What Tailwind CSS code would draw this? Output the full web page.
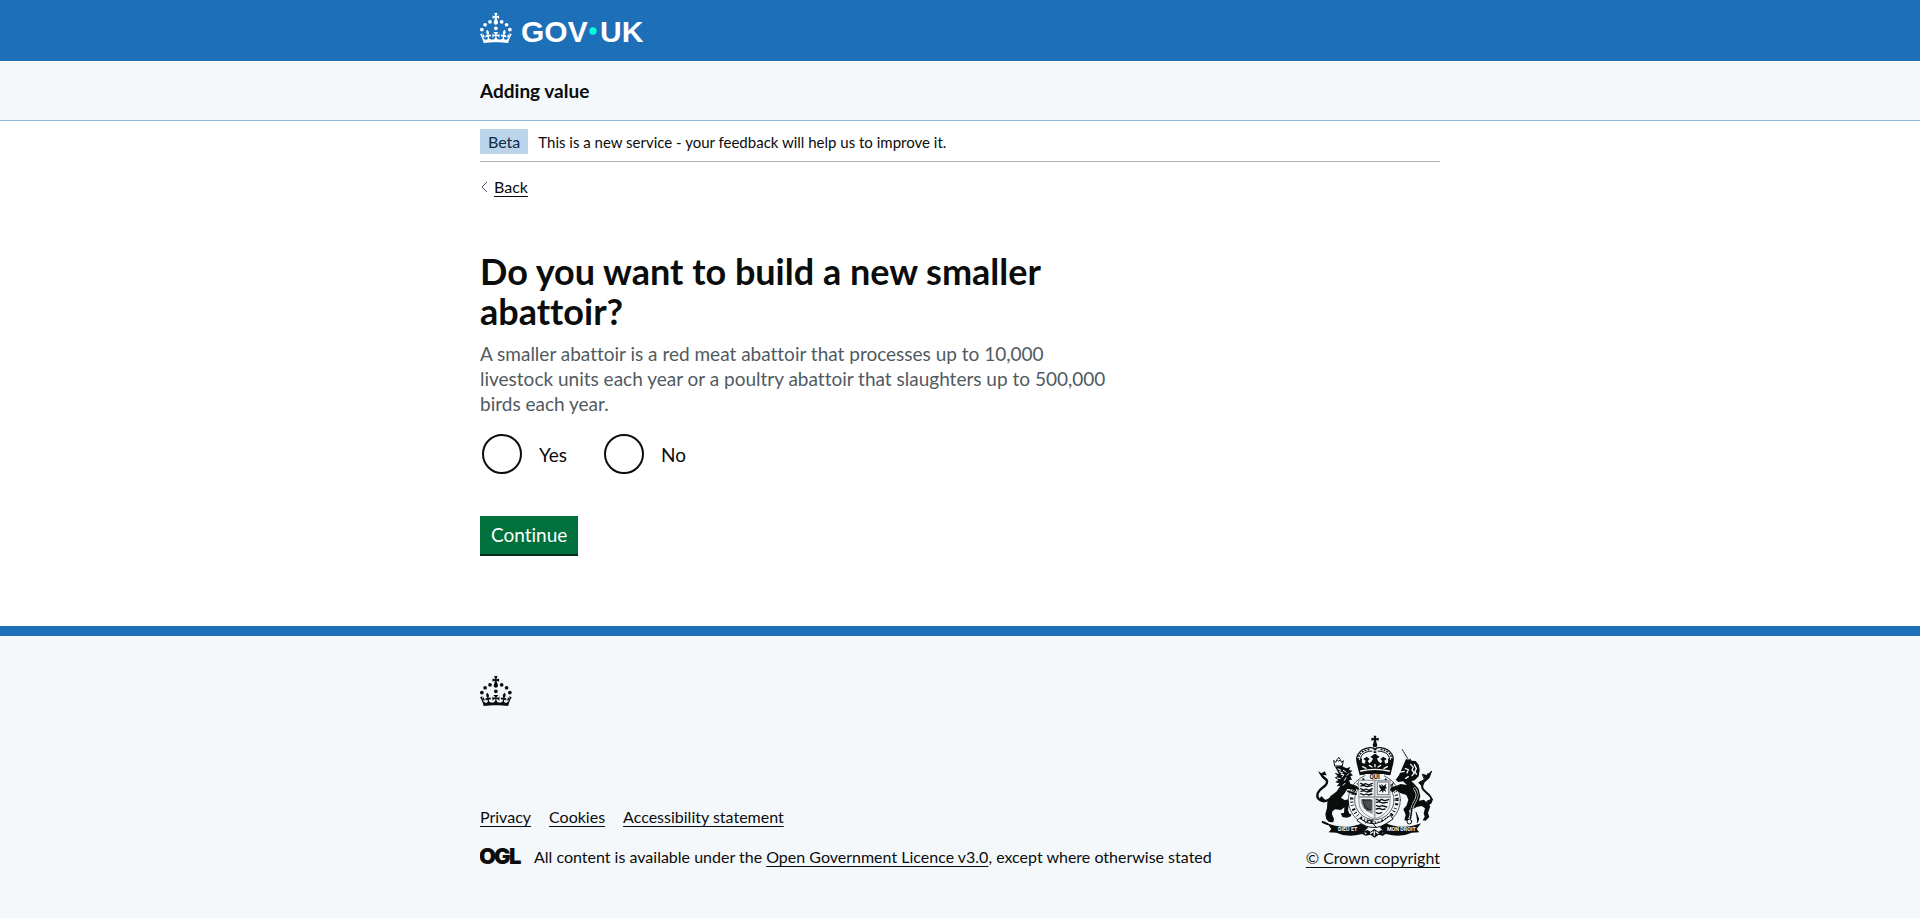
<!DOCTYPE html>
<html lang="en">
<head>
<meta charset="utf-8">
<meta name="viewport" content="width=device-width, initial-scale=1">
<title>Do you want to build a new smaller abattoir? - Adding value</title>
<script src="https://cdn.jsdelivr.net/npm/@tailwindcss/browser@4"></script>
</head>
<body class="flex min-h-screen flex-col bg-[#f4f8fb] font-['Lato',sans-serif] text-base text-[#0b0c0c] [font-variant-ligatures:none]">

<!-- Shared crown symbol -->
<svg class="hidden" aria-hidden="true">
  <symbol id="crown" viewBox="0 0 64 60">
    <circle cx="20" cy="17.6" r="3.7"/><circle cx="10.2" cy="23.5" r="3.7"/><circle cx="3.7" cy="33.2" r="3.7"/><circle cx="31.7" cy="30.6" r="3.7"/><circle cx="43.3" cy="17.6" r="3.7"/><circle cx="53.2" cy="23.5" r="3.7"/><circle cx="59.7" cy="33.2" r="3.7"/>
    <path d="M33.1,9.8c.2-.1.3-.3.5-.5l4.6,2.4v-6.8l-4.6,1.5c-.1-.2-.3-.3-.5-.5l1.9-5.9h-6.7l1.9,5.9c-.2.1-.3.3-.5.5l-4.6-1.5v6.8l4.6-2.4c.1.2.3.3.5.5l-2.6,8c-.9,2.8,1.2,5.7,4.1,5.7h0c3,0,5.1-2.9,4.1-5.7l-2.6-8ZM37,37.9s-3.4,3.8-4.1,6.1c2.2,0,4.2-.5,6.4-2.8l-.7,8.5c-2-2.8-4.4-4.1-5.7-3.8.1,3.1.5,6.7,5.8,7.2,3.7.3,6.7-1.5,7-3.8.4-2.6-2-4.3-3.7-1.6-1.4-4.5,2.4-6.1,4.9-3.2-1.9-4.5-1.8-7.7,2.4-10.9,3,4,2.6,7.3-1.2,11.1,2.4-1.3,6.2,0,4,4.6-1.2-2.8-3.7-2.2-4.2.2-.3,1.7.7,3.7,3,4.2,1.9.3,4.7-.9,7-5.9-1.3,0-2.4.7-3.9,1.7l2.4-8c.6,2.3,1.4,3.7,2.2,4.5.6-1.6.5-2.8,0-5.3l5,1.8c-2.6,3.6-5.2,8.7-7.3,17.5-7.4-1.1-15.7-1.7-24.5-1.7h0c-8.8,0-17.1.6-24.5,1.7-2.1-8.9-4.7-13.9-7.3-17.5l5-1.8c-.5,2.5-.6,3.7,0,5.3.8-.8,1.6-2.3,2.2-4.5l2.4,8c-1.5-1-2.6-1.7-3.9-1.7,2.3,5,5.2,6.2,7,5.9,2.3-.4,3.3-2.4,3-4.2-.5-2.4-3-3.1-4.2-.2-2.2-4.6,1.6-6,4-4.6-3.7-3.7-4.2-7.1-1.2-11.1,4.2,3.2,4.3,6.4,2.4,10.9,2.5-2.8,6.3-1.3,4.9,3.2-1.8-2.7-4.1-1-3.7,1.6.3,2.3,3.3,4.1,7,3.8,5.4-.5,5.7-4.2,5.8-7.2-1.3-.2-3.7,1-5.7,3.8l-.7-8.5c2.2,2.3,4.2,2.7,6.4,2.8-.7-2.3-4.1-6.1-4.1-6.1h10.6Z"/>
  </symbol>
</svg>

<header>
  <div class="bg-[#1d70b8] text-white">
    <div class="mx-auto flex h-[61px] max-w-[960px] items-start pt-[13px]">
      <a href="#" aria-label="GOV.UK" class="flex items-start gap-2">
        <svg class="h-[30px] w-8 fill-current" aria-hidden="true"><use href="#crown"/></svg>
        <svg class="h-10 w-[126px] fill-current" viewBox="0 0 126 40" aria-hidden="true">
          <g font-family="Liberation Sans, sans-serif" font-size="30" font-weight="700"><text x="1" y="29">GOV</text><text x="80" y="29">UK</text></g>
          <circle cx="73" cy="18" r="3.7" fill="#00ffe0"/>
        </svg>
      </a>
    </div>
  </div>
  <div class="border-b border-[#8eb8dc] bg-[#f4f8fb]">
    <div class="mx-auto flex h-[59px] max-w-[960px] items-center">
      <a href="#" class="text-[19px] leading-[25px] font-bold">Adding value</a>
    </div>
  </div>
</header>

<div class="w-full bg-white pb-[70px]">
  <div class="mx-auto max-w-[960px]">
    <div class="flex items-center gap-[10px] border-b border-[#b1b4b6] pt-2 pb-[7px]">
      <strong class="bg-[#bbd4ea] px-2 leading-[25px] font-normal text-[#0c2d4a]">Beta</strong>
      <span class="text-[15px] leading-5">This is a new service - your feedback will help us to improve it.</span>
    </div>
    <a href="#" class="mt-[15px] inline-flex items-center gap-[6px] leading-5">
      <svg class="h-3 w-2 fill-none stroke-[#505a5f]" viewBox="0 0 8 12" aria-hidden="true"><path d="M7 1 2 6l5 5"/></svg>
      <span class="underline underline-offset-[3px]">Back</span>
    </a>

    <main class="mt-[52px] max-w-[636px]">
      <form>
        <fieldset aria-describedby="hint">
          <legend><h1 class="text-[36px] leading-10 font-bold">Do you want to build a new smaller abattoir?</h1></legend>
          <p id="hint" class="mt-[10px] text-[19px] leading-[25px] text-[#505a5f]">A smaller abattoir is a red meat abattoir that processes up to 10,000 livestock units each year or a poultry abattoir that slaughters up to 500,000 birds each year.</p>
          <div class="mt-[18px] ml-[2px] flex gap-[37px] text-[19px] leading-[25px]">
            <label class="flex items-center gap-[17px]"><input type="radio" name="build" value="yes" class="size-10 appearance-none rounded-full border-2 border-[#0b0c0c] bg-white checked:shadow-[inset_0_0_0_8px_white] checked:bg-[#0b0c0c]">Yes</label>
            <label class="flex items-center gap-[17px]"><input type="radio" name="build" value="no" class="size-10 appearance-none rounded-full border-2 border-[#0b0c0c] bg-white checked:shadow-[inset_0_0_0_8px_white] checked:bg-[#0b0c0c]">No</label>
          </div>
        </fieldset>
        <button type="submit" class="mt-[42px] h-10 border-b-2 border-[#002d18] bg-[#00703c] px-[11px] text-[19px] leading-[38px] text-white">Continue</button>
      </form>
    </main>
  </div>
</div>

<footer class="w-full grow border-t-10 border-[#1d70b8]">
  <div class="mx-auto max-w-[960px] pt-10">
    <svg class="h-[30px] w-8 fill-current" aria-hidden="true"><use href="#crown"/></svg>
    <div class="mt-[29px] flex items-end justify-between">
      <div>
        <ul class="flex gap-[18px] leading-5">
          <li><a href="#" class="underline underline-offset-[3px]">Privacy</a></li>
          <li><a href="#" class="underline underline-offset-[3px]">Cookies</a></li>
          <li><a href="#" class="underline underline-offset-[3px]">Accessibility statement</a></li>
        </ul>
        <div class="mt-4 flex items-center gap-3 leading-5">
          <svg class="h-7 w-[42px] fill-current" viewBox="0 0 42 28" role="img" aria-label="Open Government Licence">
            <g font-family="Inter, sans-serif" font-size="22" font-weight="900"><text x="-1" y="21">O</text><text x="14" y="21">G</text><text x="29" y="21">L</text></g>
          </svg>
          <p>All content is available under the <a href="#" class="underline underline-offset-[3px]">Open Government Licence v3.0</a>, except where otherwise stated</p>
        </div>
      </div>
      <a href="#" class="flex flex-col items-end pb-[3px] leading-5">
        <svg class="mr-[7px] mb-[10px] h-[103px] w-[117px]" viewBox="50 31 351 309" fill="#0b0c0c" stroke-linejoin="round" stroke-linecap="round" aria-hidden="true">
          <!-- crown -->
          <path d="M223 33h8l-1 8 8-2v9l-8-2 2 10h-10l2-10-8 2v-9l8 2z"/>
          <circle cx="227" cy="61" r="7"/>
          <path d="M181 124C162 101 176 73 212 69q12-1 15 6 3-7 15-6c36 4 50 32 31 55" fill="none" stroke="#0b0c0c" stroke-width="4"/>
          <path d="M188 117C176 99 188 80 218 79M266 117c12-18 0-37-30-38" fill="none" stroke="#0b0c0c" stroke-width="3"/>
          <path d="M184 120C168 101 182 76 214 74M270 120c16-19 2-44-30-46" fill="none" stroke="#0b0c0c" stroke-width="5" stroke-dasharray="1 8"/>
          <path d="M227 72v34" fill="none" stroke="#0b0c0c" stroke-width="8" stroke-dasharray="5 3" stroke-linecap="butt"/>
          <path d="M174 99l6 8 8-6-1 13 9 3 3-9-7-5 10-7 9 7-6 6 5 7 7-6 4-8-8-6 14-8 14 8-8 6 4 8 7 6 5-7-6-6 9-7 10 7-7 5 3 9 9-3-1-13 8 6 6-8 2 17-9 36q-46-10-92 0l-9-36z"/>
          <path d="M184 139q43-10 86 0M190 126l10 5M264 126l-10 5M210 122l8 5M244 122l-8 5M227 119v7" fill="none" stroke="#f4f8fb" stroke-width="4"/>
          <!-- garter -->
          <circle cx="225" cy="226" r="78" fill="#f4f8fb" stroke="#0b0c0c" stroke-width="2"/>
          <circle cx="225" cy="226" r="68" fill="none" stroke="#0b0c0c" stroke-width="10" stroke-dasharray="3 7 6 9 2 7" stroke-linecap="butt"/>
          <circle cx="225" cy="226" r="59" fill="#f4f8fb" stroke="#0b0c0c" stroke-width="2"/>
          <path d="M198 148h56v20h-56z" fill="#f4f8fb"/>
          <text x="226" y="164" text-anchor="middle" font-family="Roboto, sans-serif" font-size="19" font-weight="700">QUI</text>
          <!-- quartered shield -->
          <path d="M179 167h93v66c0 28-25 43-46 50-22-7-47-22-47-50z" fill="#f4f8fb" stroke="#8b8f91" stroke-width="3"/>
          <path d="M226 167v116M179 217h93" fill="none" stroke="#a4a8aa" stroke-width="6"/>
          <path d="M234 172h34v38h-34z" fill="none" stroke="#8b8f91" stroke-width="4"/>
          <path d="M184 176l8 4 7-3 8 4 12-5M185 184l7-2 11 4 15-3M184 192l9 4 7-3 8 4 11-5M185 200l8-2 10 4 14-3M184 207l9 4 8-3 6 3 11-3" fill="none" stroke="#0b0c0c" stroke-width="4"/>
          <path d="M240 179l9 8-4-10 8 7 8-7-2 10 5 3-7 2 4 10-8-5-2 8-4-7-9 5 7-9-5-6z"/>
          <path d="M231 224l10 4 5-4 10 4 12-3M231 233l8-2 10 4 15-2M231 243l9 3 9-3 13 4M231 253l9-2 9 4 8-2M231 264l7 3 9-3" fill="none" stroke="#0b0c0c" stroke-width="4"/>
          <path d="M184 224h36v44c-20-7-36-20-36-44z" fill="#8b8f91"/>
          <path d="M191 226h24v30c-12-2-24-12-24-30zM197 228v23M203 228v29M209 228v28" fill="none" stroke="#0b0c0c" stroke-width="3"/>
          <!-- lion -->
          <path d="M104 108l5 5 4-8 5 5 5-5 4 8 5-5-3 16h-22zM115 103l3-5 4 5" fill="none" stroke="#0b0c0c" stroke-width="3"/>
          <path d="M107 126l20-3 14 8 12-4-4 9 10 2-6 6 8 8-8 3 5 10-9 2 4 10 20 7 8 11-12-3 2 9-12-7-15-1-8 13-11 13 12 8 9-3 3 14-3 18 3 8 6 11-12 4-14-2-3-8 8-4 1-17-10 8-17-2-9 6-1 9 6 14-2 10-13-1-8-8-3-15 5-19 1-17 9-18 18-14 12-17-11 1 8-9-12-3 9-7-11-7 9-5-9-9 11-1z"/>
          <path d="M116 133l7 2-2 7 9 2-5 5 9 1-6 7M110 144l7 2M132 137l8 5M113 160l10 2M140 159l-5 8M148 147l-5 5M137 176l-6 6" fill="none" stroke="#f4f8fb" stroke-width="3"/>
          <path d="M92 223c-23 16-44-1-36-19 7-16 30-20 27-34-2-10-14-7-15-19" fill="none" stroke="#0b0c0c" stroke-width="7"/>
          <path d="M56 139l10 7 10-6 6 12-12-1 18 16-18-7-8-10zM60 223l6-9 12 12-9 7z"/>
          <path d="M150 190l18 3M146 200l24 8M70 292l14 6M128 268l25 3" fill="none" stroke="#0b0c0c" stroke-width="6"/>
          <!-- unicorn -->
          <path d="M309 75l19 32" fill="none" stroke="#0b0c0c" stroke-width="3" stroke-dasharray="5 3"/>
          <path d="M320 103l9 4 3-6 5 7 12 1 9 11 3 15-3 20-12 12-10 3 10 9 12 14 5 21-4 14 15-3 19 20-7 20 4 12-11 11-9-1 6-11-3-10 4-15-10-7-15 3-14 8-9 2 3 13-8 18-9-1 4-17-7-16 10-12 5-17-6-14-18-6-15-10-8 8-8-7 5-9 13-3 14-6 19 3-12-11-14 2-8-7 10-13z"/>
          <path d="M334 119l8 9-4 8 7 9-7 8M345 120l6 12-4 8 4 9M318 132l9 3-4 10M302 142l13-2M327 156l-8 5" fill="none" stroke="#f4f8fb" stroke-width="4"/>
          <path d="M346 192c14 18 5 31-3 45s-5 24-10 45" fill="none" stroke="#f4f8fb" stroke-width="8"/>
          <path d="M346 192c14 18 5 31-3 45s-5 24-10 45" fill="none" stroke="#0b0c0c" stroke-width="5" stroke-dasharray="3 4"/>
          <circle cx="330" cy="291" r="7" fill="none" stroke="#0b0c0c" stroke-width="3"/>
          <path d="M367 234c24 15 38-7 23-22-19-18-27-21-18-38 5-11 17-7 14-25" fill="none" stroke="#0b0c0c" stroke-width="6"/>
          <path d="M370 149l13 4 14-14-8 21-12 6zM366 182l-8-8 16-9zM383 241l10-4 7-14-16 6zM282 174l-5 13M294 188l-10 12M350 263l8 20-4 11" stroke="#0b0c0c" stroke-width="3"/>
          <!-- motto ribbon -->
          <path d="M83 296l24 7q43 10 86-9l13 15-12 12 8 13-14-6q-44 12-77-4l-23-1 8-10zM365 296l-24 7q-43 10-86-9l-13 15 12 12-8 13 14-6q44 12 77-4l23-1-8-10z"/>
          <g fill="#f4f8fb" font-family="Roboto, sans-serif" font-size="16" font-weight="700" text-anchor="middle"><text x="145" y="320">DIEU ET</text><text x="306" y="320">MON DROIT</text></g>
          <path d="M181 281q43 38 92-9l8 11q-39 29-57 25-25 2-50-20z" fill="#f4f8fb" stroke="#0b0c0c" stroke-width="3"/>
          <path d="M198 295l13-9 20 22M203 286l20 3" fill="none" stroke="#0b0c0c" stroke-width="3"/>
          <path d="M190 321l15-5 8 5 12-8 12 8 9-5 14 5-11 4 4 8-15-3-12 9-13-9-15 3 4-8z"/>
          <path d="M214 326l6-4M236 326l-6-4M225 320v12" fill="none" stroke="#f4f8fb" stroke-width="4"/>
        </svg>
        <span class="underline underline-offset-[3px]">© Crown copyright</span>
      </a>
    </div>
  </div>
</footer>
</body>
</html>
